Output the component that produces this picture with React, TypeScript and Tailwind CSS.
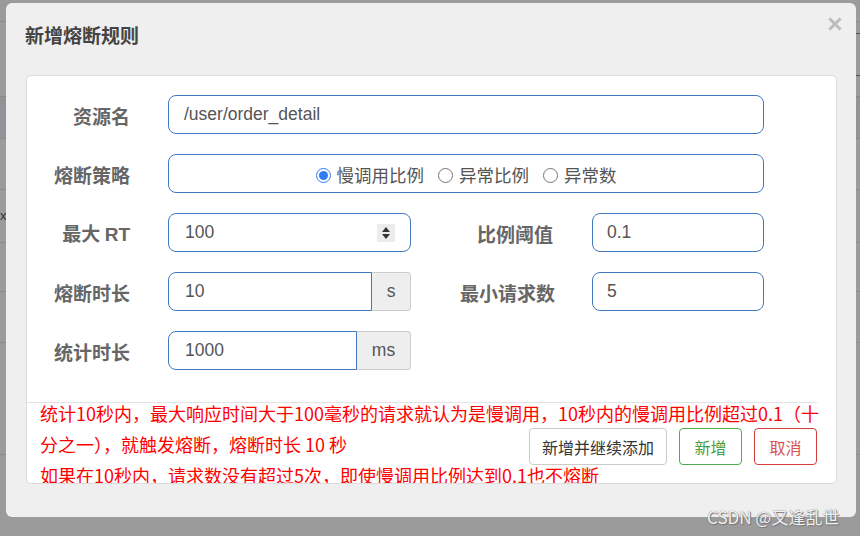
import React from "react";

const cjk = { fontFamily: '"Noto Sans CJK SC", "Liberation Sans", sans-serif' };
const latin = { fontFamily: '"Liberation Sans", "Noto Sans CJK SC", sans-serif' };

const bgRows = [22, 75, 42, 51, 53, 49, 51, 112];

function Label({ children, w }: { children: React.ReactNode; w: string }) {
  return (
    <div className={`${w} shrink-0 pt-[3px] text-right text-[19px] font-bold text-[#666]`} style={cjk}>
      {children}
    </div>
  );
}

function Radio({ checked, label }: { checked?: boolean; label: string }) {
  return (
    <span className="flex items-center gap-[6px]">
      {checked ? (
        <span className="flex h-[15px] w-[15px] items-center justify-center rounded-full border-[1.5px] border-[#2f7cf6]">
          <span className="h-[9px] w-[9px] rounded-full bg-[#2f7cf6]" />
        </span>
      ) : (
        <span className="h-[15px] w-[15px] rounded-full border border-[#767676]" />
      )}
      <span className="text-[17.5px] text-[#555]" style={cjk}>
        {label}
      </span>
    </span>
  );
}

export default function App() {
  return (
    <div className="relative h-[536px] w-[860px] overflow-hidden bg-[#9b9b9b]">
      {/* page behind the modal */}
      <div className="flex flex-col">
        {bgRows.map((h, i) => (
          <div
            key={i}
            className={`border-b border-[#8a8a8a] ${i === 2 ? "bg-[#929396]" : ""}`}
            style={{ height: h }}
          />
        ))}
      </div>
      <div className="absolute left-[856px] top-[33px] h-[43px] w-[4px] border-y border-[#3d5b7a]" />
      <div className="absolute left-0 top-[206px] text-[13px] text-[#333]" style={latin}>
        x
      </div>

      {/* modal */}
      <div className="absolute left-[6px] top-[3px] flex h-[514px] w-[850px] flex-col rounded-[6px] bg-[#efefef]">
        <div className="flex items-start justify-between pl-[19px] pr-[14px] pt-[20px]">
          <div className="text-[19px] font-bold leading-[24px] text-[#444]" style={cjk}>
            新增熔断规则
          </div>
          <svg width="14" height="14" viewBox="0 0 14 14" className="mt-[-6px]">
            <path d="M1.5 1.5 L12.5 12.5 M12.5 1.5 L1.5 12.5" stroke="#bcbcbc" strokeWidth="3" />
          </svg>
        </div>

        <div className="relative ml-[20px] mt-[28px] h-[409px] w-[811px] overflow-hidden rounded-[5px] border border-[#dcdcdc] bg-white">
          <div className="flex flex-col gap-[20px] pt-[19px]">
            <div className="flex h-[39px] items-center gap-[38px]">
              <Label w="w-[103px]">资源名</Label>
              <div className="flex h-[39px] w-[596px] items-center rounded-[8px] border border-[#4178be] px-[15px] text-[17.5px] text-[#555]" style={latin}>
                /user/order_detail
              </div>
            </div>

            <div className="flex h-[39px] items-center gap-[38px]">
              <Label w="w-[103px]">熔断策略</Label>
              <div className="flex h-[39px] w-[596px] items-center justify-center gap-[14px] rounded-[8px] border border-[#4178be] pt-[4px]">
                <Radio checked label="慢调用比例" />
                <Radio label="异常比例" />
                <Radio label="异常数" />
              </div>
            </div>

            <div className="flex h-[39px] items-center">
              <Label w="w-[103px]">
                最大 <span style={latin}>RT</span>
              </Label>
              <div className="ml-[38px] flex h-[39px] w-[243px] items-center justify-between rounded-[8px] border border-[#4178be] pl-[16px] pr-[15px] text-[17.5px] text-[#555]" style={latin}>
                <span>100</span>
                <span className="flex h-[18px] w-[18px] items-center justify-center bg-[#ececec]">
                  <svg width="10" height="14" viewBox="0 0 10 14">
                    <path d="M5 1 L9 6 L1 6 Z M1 8 L9 8 L5 13 Z" fill="#333" />
                  </svg>
                </span>
              </div>
              <Label w="w-[142px]">比例阈值</Label>
              <div className="ml-[39px] flex h-[39px] w-[172px] items-center rounded-[8px] border border-[#4178be] px-[14px] text-[17.5px] text-[#555]" style={latin}>
                0.1
              </div>
            </div>

            <div className="flex h-[39px] items-center">
              <Label w="w-[103px]">熔断时长</Label>
              <div className="ml-[38px] flex h-[39px] w-[243px]">
                <div className="flex w-[204px] items-center rounded-l-[8px] border border-[#4178be] px-[16px] text-[17.5px] text-[#555]" style={latin}>
                  10
                </div>
                <div className="flex flex-1 items-center justify-center rounded-r-[4px] border border-l-0 border-[#ccc] bg-[#eee] text-[17.5px] text-[#555]" style={latin}>
                  s
                </div>
              </div>
              <Label w="w-[144px]">最小请求数</Label>
              <div className="ml-[37px] flex h-[39px] w-[172px] items-center rounded-[8px] border border-[#4178be] px-[14px] text-[17.5px] text-[#555]" style={latin}>
                5
              </div>
            </div>

            <div className="flex h-[39px] items-center">
              <Label w="w-[103px]">统计时长</Label>
              <div className="ml-[38px] flex h-[39px] w-[243px]">
                <div className="flex w-[189px] items-center rounded-l-[8px] border border-[#4178be] px-[16px] text-[17.5px] text-[#555]" style={latin}>
                  1000
                </div>
                <div className="flex flex-1 items-center justify-center rounded-r-[4px] border border-l-0 border-[#ccc] bg-[#eee] text-[17.5px] text-[#555]" style={latin}>
                  ms
                </div>
              </div>
            </div>
          </div>

          <div className="mt-[32px] w-[790px] border-t border-[#e2e2e2]" />
          <p className="-mt-[5px] pl-[13px] text-[18px] leading-[31px] text-[#f00]" style={cjk}>
            统计10秒内，最大响应时间大于100毫秒的请求就认为是慢调用，10秒内的慢调用比例超过0.1（十分之一），就触发熔断，熔断时长 10 秒
            <br />
            如果在10秒内，请求数没有超过5次，即使慢调用比例达到0.1也不熔断
          </p>

          <div className="absolute right-[19px] top-[352px] flex gap-[12px] text-[16px]" style={cjk}>
            <button className="h-[37px] w-[138px] rounded-[4px] border border-[#ccc] bg-white text-[#333]">
              新增并继续添加
            </button>
            <button className="h-[37px] w-[63px] rounded-[4px] border border-[#4cae4c] bg-white text-[#449d44]">
              新增
            </button>
            <button className="h-[37px] w-[63px] rounded-[4px] border border-[#d43f3a] bg-white text-[#d9534f]">
              取消
            </button>
          </div>
        </div>
      </div>

      <div
        className="absolute left-[707px] top-[504px] text-[17px] text-[#f2f2f2]"
        style={{ ...cjk, textShadow: "0 0 1px #666, 1px 1px 1px #777" }}
      >
        CSDN @又逢乱世
      </div>
    </div>
  );
}
